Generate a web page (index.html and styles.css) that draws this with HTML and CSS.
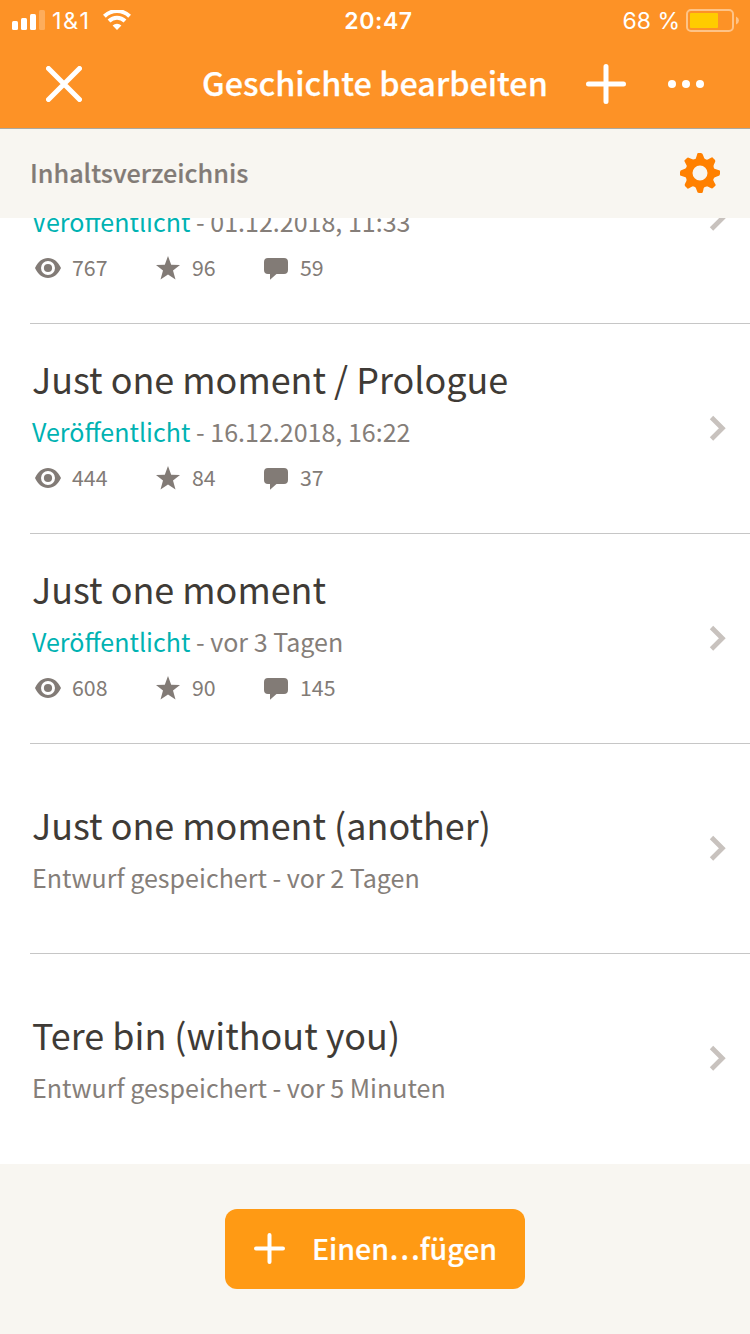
FILE: index.html
```html
<!DOCTYPE html>
<html lang="de">
<head>
<meta charset="utf-8">
<title>Geschichte bearbeiten</title>
<link rel="stylesheet" href="styles.css">
</head>
<body>
<svg class="defs" width="0" height="0">
  <symbol id="eye" viewBox="0 0 26 20"><path fill-rule="evenodd" d="M0 10C3 3.500 7.500 0 13 0s10 3.500 13 10c-3 6.500-7.500 10-13 10S3 16.500 0 10zm13-7a7 7 0 1 0 0 14a7 7 0 0 0 0-14z"/><circle cx="13" cy="10" r="4.100"/></symbol>
  <symbol id="star" viewBox="0 0 24 24"><path d="M12 0l3.200 8.700 8.800.2-7 5.600 2.500 9-7.500-5.100-7.500 5.100 2.500-9-7-5.600 8.800-.2z"/></symbol>
  <symbol id="bubble" viewBox="0 0 24 22"><path d="M4 0h16a4 4 0 0 1 4 4v8a4 4 0 0 1-4 4h-7.500L6 21.800V16H4a4 4 0 0 1-4-4V4a4 4 0 0 1 4-4z"/></symbol>
  <symbol id="chevron" viewBox="0 0 18 26"><path d="M2.500 2.500L13.300 13.300 2.500 24" fill="none" stroke="#c8c2be" stroke-width="4.800"/></symbol>
  <symbol id="tooth" viewBox="-20 -20 40 40"><path d="M-6-12.500Q-3.800-14-3.200-17.500T-1-20H1Q2.700-20 3.200-17.500T6-12.500z"/></symbol>
</svg>
<div class="screen">
  <header class="header">
    <div class="status">
      <div class="status-left">
        <svg class="signal" width="33" height="20" viewBox="0 0 33 20" fill="#fff"><rect y="11" width="6" height="9" rx="1.500"/><rect x="9" y="8" width="6" height="12" rx="1.500"/><rect x="18" y="4" width="6" height="16" rx="1.500"/><rect x="27" width="6" height="20" rx="1.500" opacity=".25"/></svg>
        <span class="carrier">1&amp;1</span>
        <svg class="wifi" width="28" height="20" viewBox="0 0 28 20"><path d="M1.400 6.200a18 18 0 0 1 25.200 0M6 11a11.500 11.500 0 0 1 16 0" fill="none" stroke="#fff" stroke-width="4"/><path d="M14 20l-4.400-4.400a6.300 6.300 0 0 1 8.800 0z" fill="#fff"/></svg>
      </div>
      <span class="clock">20:47</span>
      <div class="status-right">
        <span class="percent">68 %</span>
        <svg class="battery" width="54" height="24" viewBox="0 0 54 24"><rect x="1" y="1" width="46" height="21" rx="4" fill="none" stroke="#fff" stroke-opacity=".45" stroke-width="2"/><rect x="4" y="4" width="28" height="15" rx="1" fill="#fc0"/><path d="M50 7.500q3 1.500 3 4t-3 4z" fill="#fff" opacity=".45"/></svg>
      </div>
    </div>
    <div class="nav">
      <svg class="close" width="36" height="36" viewBox="0 0 36 36"><path d="M2.500 2.500l31 31M33.500 2.500l-31 31" stroke="#fff" stroke-width="5" stroke-linecap="round"/></svg>
      <h1 class="nav-title">Geschichte bearbeiten</h1>
      <svg class="add" width="40" height="40" viewBox="0 0 40 40"><path d="M20 2.500v35M2.500 20h35" stroke="#fff" stroke-width="5" stroke-linecap="round"/></svg>
      <svg class="more" width="36" height="8" viewBox="0 0 36 8" fill="#fff"><circle cx="4" cy="4" r="4"/><circle cx="18" cy="4" r="4"/><circle cx="32" cy="4" r="4"/></svg>
    </div>
  </header>
  <div class="section">
    <h2 class="section-title">Inhaltsverzeichnis</h2>
    <svg class="gear" width="40" height="40" viewBox="-20 -20 40 40" fill="#ff8000">
      <g id="teeth">
        <use href="#tooth" x="-20" y="-20" width="40" height="40"/>
        <use href="#tooth" x="-20" y="-20" width="40" height="40" transform="rotate(45)"/>
        <use href="#tooth" x="-20" y="-20" width="40" height="40" transform="rotate(90)"/>
        <use href="#tooth" x="-20" y="-20" width="40" height="40" transform="rotate(135)"/>
      </g>
      <use href="#teeth" transform="rotate(180)"/>
      <circle r="11.100" fill="none" stroke="#ff8000" stroke-width="7.200"/>
    </svg>
  </div>
  <main class="list">
    <article class="row">
      <div class="body">
        <p class="meta"><span class="published">Veröffentlicht</span> - 01.12.2018, 11:33</p>
        <div class="stats"><span class="stat"><svg class="eye"><use href="#eye"/></svg>767</span><span class="stat"><svg class="star"><use href="#star"/></svg>96</span><span class="stat"><svg class="bubble"><use href="#bubble"/></svg>59</span></div>
      </div>
      <svg class="chevron"><use href="#chevron"/></svg>
    </article>
    <article class="row">
      <div class="body">
        <h3 class="title">Just one moment / Prologue</h3>
        <p class="meta"><span class="published">Veröffentlicht</span> - 16.12.2018, 16:22</p>
        <div class="stats"><span class="stat"><svg class="eye"><use href="#eye"/></svg>444</span><span class="stat"><svg class="star"><use href="#star"/></svg>84</span><span class="stat"><svg class="bubble"><use href="#bubble"/></svg>37</span></div>
      </div>
      <svg class="chevron"><use href="#chevron"/></svg>
    </article>
    <article class="row">
      <div class="body">
        <h3 class="title">Just one moment</h3>
        <p class="meta"><span class="published">Veröffentlicht</span> - vor 3 Tagen</p>
        <div class="stats"><span class="stat"><svg class="eye"><use href="#eye"/></svg>608</span><span class="stat"><svg class="star"><use href="#star"/></svg>90</span><span class="stat"><svg class="bubble"><use href="#bubble"/></svg>145</span></div>
      </div>
      <svg class="chevron"><use href="#chevron"/></svg>
    </article>
    <article class="row draft">
      <div class="body">
        <h3 class="title">Just one moment (another)</h3>
        <p class="meta">Entwurf gespeichert - vor 2 Tagen</p>
      </div>
      <svg class="chevron"><use href="#chevron"/></svg>
    </article>
    <article class="row draft">
      <div class="body">
        <h3 class="title">Tere bin (without you)</h3>
        <p class="meta">Entwurf gespeichert - vor 5 Minuten</p>
      </div>
      <svg class="chevron"><use href="#chevron"/></svg>
    </article>
  </main>
  <footer class="footer">
    <button class="button">
      <svg class="button-icon" width="31" height="31" viewBox="0 0 31 31"><path d="M15.500 2v27M2 15.500h27" stroke="#fff" stroke-width="4" stroke-linecap="round"/></svg>
      <span class="button-label">Einen…fügen</span>
    </button>
  </footer>
</div>
</body>
</html>
```
FILE: styles.css
```css
* { box-sizing: border-box; margin: 0; padding: 0; }
body { background: #fff; font-family: "Noto Sans CJK SC", "Noto Sans", sans-serif; }
svg { display: block; flex: none; }
.defs { position: absolute; }
.screen { width: 750px; height: 1334px; display: flex; flex-direction: column; overflow: hidden; }

.header { height: 129px; flex: none; background: #fd9226; border-bottom: 1px solid #aaa9a2; color: #fff; }
.status { height: 40px; display: grid; grid-template-columns: 1fr auto 1fr; align-items: center; font-family: Inter, sans-serif; font-size: 23.5px; line-height: 38px; }
.status-left { display: flex; align-items: center; padding-left: 12px; }
.carrier { width: 51px; padding: 2px 0 0 7px; white-space: nowrap; letter-spacing: 1.4px; }
.wifi { margin-left: 7px; }
.clock { font-size: 23px; font-weight: 600; letter-spacing: 0.6px; padding: 2px 0 0 7px; }
.status-right { display: flex; align-items: center; justify-content: flex-end; padding-right: 10px; }
.battery { margin-top: 1px; }
.percent { margin-right: 6px; padding-top: 2px; white-space: nowrap; font-size: 23px; }
.nav { height: 88px; display: flex; align-items: center; padding: 0 46px; }
.nav-title { width: 345px; margin-left: 120px; padding-bottom: 4px; font-size: 32.35px; font-weight: 500; line-height: 48px; white-space: nowrap; -webkit-text-stroke: 0.25px; }
.add { margin-left: 39px; }
.more { margin-left: 42px; }

.section { height: 89px; flex: none; display: flex; align-items: center; justify-content: space-between; padding: 0 30px 2px; background: #f8f6f1; }
.section-title { padding-bottom: 2px; font-size: 25.2px; font-weight: 500; line-height: 40px; color: #827b76; -webkit-text-stroke: 0.2px; }

.list { height: 946px; flex: none; overflow: hidden; }
.row { height: 210px; margin-left: 30px; padding-right: 23px; display: flex; align-items: center; border-bottom: 1px solid #c6c6c6; }
.row:first-child { margin-top: -104px; }
.row:last-child { border-bottom-color: transparent; }
.body { flex: 1; height: 209px; padding: 0 0 41px 2px; display: flex; flex-direction: column; justify-content: flex-end; }
.draft .body { padding-bottom: 56px; }
.title { font-size: 35.95px; font-weight: 400; line-height: 52px; color: #3f3b36; white-space: nowrap; }
.meta { margin-top: 7px; font-size: 25.05px; line-height: 40px; color: #857e79; white-space: nowrap; }
.published { color: #00b2b2; }
.stats { margin-top: 11px; height: 30px; display: grid; grid-template-columns: 120px 108px auto; font-size: 21.3px; line-height: 30px; color: #827b76; }
.stat { display: flex; align-items: center; }
.stat svg { fill: #827b76; }
.eye { width: 26px; height: 20px; margin: 2px 11px 0 3px; }
.star { width: 24px; height: 24px; margin: 2px 12px 0 4px; }
.bubble { width: 24px; height: 22px; margin: 3px 12px 0 4px; }
.chevron { width: 18px; height: 26px; margin-bottom: 1px; }

.footer { flex: 1; display: flex; align-items: center; justify-content: center; background: #f8f6f1; }
.button { width: 300px; height: 80px; display: flex; align-items: center; padding-left: 29px; border: 0; border-radius: 12px; background: #ff9a14; color: #fff; font-family: inherit; }
.button-icon { margin-bottom: 1px; }
.button-label { margin-left: 27px; padding-bottom: 2px; font-size: 28.5px; font-weight: 500; line-height: 40px; white-space: nowrap; -webkit-text-stroke: 0.2px; }
```
